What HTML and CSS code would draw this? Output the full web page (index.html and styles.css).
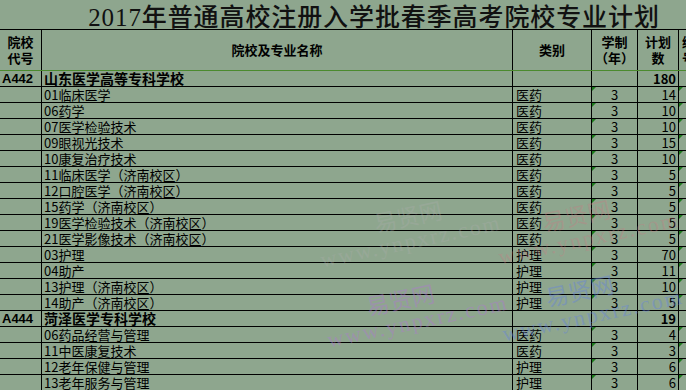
FILE: index.html
```
<!DOCTYPE html>
<html lang="zh-CN">
<head>
<meta charset="utf-8">
<title>2017年普通高校注册入学批春季高考院校专业计划</title>
<link rel="stylesheet" href="styles.css">
</head>
<body>
<div class="sheet">
  <div class="title"><span class="num">2017</span>年普通高校注册入学批春季高考院校专业计划</div>
  <div class="row head">
    <div class="cell c">院校<br>代号</div>
    <div class="cell c">院校及专业名称</div>
    <div class="cell c">类别</div>
    <div class="cell c">学制<br>（年）</div>
    <div class="cell c">计划<br>数</div>
    <div class="cell top">编<br>号</div>
  </div>
  <div class="row bold"><div class="cell code">A442</div><div class="cell name">山东医学高等专科学校</div><div class="cell"></div><div class="cell"></div><div class="cell r">180</div><div class="cell"></div></div>
  <div class="row"><div class="cell"></div><div class="cell name">01临床医学</div><div class="cell cat">医药</div><div class="cell c mk">3</div><div class="cell r">14</div><div class="cell mk"></div></div>
  <div class="row"><div class="cell"></div><div class="cell name">06药学</div><div class="cell cat">医药</div><div class="cell c mk">3</div><div class="cell r">10</div><div class="cell mk"></div></div>
  <div class="row"><div class="cell"></div><div class="cell name">07医学检验技术</div><div class="cell cat">医药</div><div class="cell c mk">3</div><div class="cell r">10</div><div class="cell mk"></div></div>
  <div class="row"><div class="cell"></div><div class="cell name">09眼视光技术</div><div class="cell cat">医药</div><div class="cell c mk">3</div><div class="cell r">15</div><div class="cell mk"></div></div>
  <div class="row"><div class="cell"></div><div class="cell name">10康复治疗技术</div><div class="cell cat">医药</div><div class="cell c mk">3</div><div class="cell r">10</div><div class="cell mk"></div></div>
  <div class="row"><div class="cell"></div><div class="cell name">11临床医学（济南校区）</div><div class="cell cat">医药</div><div class="cell c mk">3</div><div class="cell r">5</div><div class="cell mk"></div></div>
  <div class="row"><div class="cell"></div><div class="cell name">12口腔医学（济南校区）</div><div class="cell cat">医药</div><div class="cell c mk">3</div><div class="cell r">5</div><div class="cell mk"></div></div>
  <div class="row"><div class="cell"></div><div class="cell name">15药学（济南校区）</div><div class="cell cat">医药</div><div class="cell c mk">3</div><div class="cell r">5</div><div class="cell mk"></div></div>
  <div class="row"><div class="cell"></div><div class="cell name">19医学检验技术（济南校区）</div><div class="cell cat">医药</div><div class="cell c mk">3</div><div class="cell r">5</div><div class="cell mk"></div></div>
  <div class="row"><div class="cell"></div><div class="cell name">21医学影像技术（济南校区）</div><div class="cell cat">医药</div><div class="cell c mk">3</div><div class="cell r">5</div><div class="cell mk"></div></div>
  <div class="row"><div class="cell"></div><div class="cell name">03护理</div><div class="cell cat">护理</div><div class="cell c mk">3</div><div class="cell r">70</div><div class="cell mk"></div></div>
  <div class="row"><div class="cell"></div><div class="cell name">04助产</div><div class="cell cat">护理</div><div class="cell c mk">3</div><div class="cell r">11</div><div class="cell mk"></div></div>
  <div class="row"><div class="cell"></div><div class="cell name">13护理（济南校区）</div><div class="cell cat">护理</div><div class="cell c mk">3</div><div class="cell r">10</div><div class="cell mk"></div></div>
  <div class="row"><div class="cell"></div><div class="cell name">14助产（济南校区）</div><div class="cell cat">护理</div><div class="cell c mk">3</div><div class="cell r">5</div><div class="cell mk"></div></div>
  <div class="row bold"><div class="cell code">A444</div><div class="cell name">菏泽医学专科学校</div><div class="cell"></div><div class="cell"></div><div class="cell r">19</div><div class="cell"></div></div>
  <div class="row"><div class="cell"></div><div class="cell name">06药品经营与管理</div><div class="cell cat">医药</div><div class="cell c mk">3</div><div class="cell r">4</div><div class="cell mk"></div></div>
  <div class="row"><div class="cell"></div><div class="cell name">11中医康复技术</div><div class="cell cat">医药</div><div class="cell c mk">3</div><div class="cell r">3</div><div class="cell mk"></div></div>
  <div class="row"><div class="cell"></div><div class="cell name">12老年保健与管理</div><div class="cell cat">护理</div><div class="cell c mk">3</div><div class="cell r">6</div><div class="cell mk"></div></div>
  <div class="row"><div class="cell"></div><div class="cell name">13老年服务与管理</div><div class="cell cat">护理</div><div class="cell c mk">3</div><div class="cell r">6</div><div class="cell mk"></div></div>
</div>
<div class="wm wm-gray"><span class="wm-cn">易贤网</span><span class="wm-url">www.ynpxrz.com</span></div>
<div class="wm wm-pink"><span class="wm-cn">易贤网</span><span class="wm-url">www.ynpxrz.com</span></div>
<div class="wm wm-purple"><span class="wm-cn">易贤网</span><span class="wm-url">www.ynpxrz.com</span></div>
<div class="wm wm-blue"><span class="wm-cn">易贤网</span><span class="wm-url">www.ynpxrz.com</span></div>
</body>
</html>
```
FILE: styles.css
```
html, body {
  margin: 0;
  padding: 0;
}
body {
  background: #8ea68e;
  overflow: hidden;
  width: 686px;
  height: 390px;
  position: relative;
  font-family: "Noto Sans CJK SC", sans-serif;
  color: #000;
}
.sheet {
  width: 748px;
}
.title {
  box-sizing: border-box;
  height: 30px;
  border-bottom: 1px solid #000;
  text-align: center;
  font-family: "Noto Sans CJK SC", serif;
  font-size: 25px;
  font-weight: 500;
  line-height: 30px;
  letter-spacing: 0.9px;
  color: #111;
}
.title .num {
  font-family: "Liberation Serif", serif;
}
.row {
  display: grid;
  grid-template-columns: 42px 471px 79px 46px 41px 69px;
  box-sizing: border-box;
  height: 16px;
  border-bottom: 1px solid #000;
  font-size: 13px;
  line-height: 15px;
}
.row.head {
  height: 41px;
  border-bottom: 1px solid #4b8a2e;
  font-weight: bold;
  font-size: 13px;
  line-height: 16px;
}
.cell {
  box-sizing: border-box;
  border-right: 1px solid #000;
  position: relative;
  white-space: nowrap;
  overflow: hidden;
}
.cell:last-child {
  border-right: none;
}
.head .cell {
  display: flex;
  align-items: center;
  justify-content: center;
  text-align: center;
}
.head .cell.top {
  align-items: flex-start;
  justify-content: flex-start;
  padding: 4px 0 0 3px;
}
.c {
  text-align: center;
}
.r {
  text-align: right;
  padding-right: 2px;
}
.name {
  padding-left: 2px;
}
.cat {
  padding-left: 3px;
}
.bold {
  font-weight: bold;
}
.bold .name {
  font-size: 14px;
}
.code {
  font-family: "Liberation Sans", sans-serif;
  font-size: 13px;
  padding-left: 2px;
}
.mk::before {
  content: "";
  position: absolute;
  left: 0;
  top: 0;
  border-top: 4px solid #1d7a1d;
  border-right: 4px solid transparent;
}
.wm {
  position: absolute;
  pointer-events: none;
  font-family: "Liberation Serif", "Noto Sans CJK SC", serif;
  transform: rotate(-12deg);
  transform-origin: left top;
  white-space: nowrap;
}
.wm-cn {
  position: absolute;
  font-family: "Noto Sans CJK SC", sans-serif;
  font-size: 23px;
}
.wm-url {
  position: absolute;
  font-size: 22px;
  letter-spacing: 2px;
}
.wm-gray { left: 318px; top: 248px; color: rgba(175, 175, 175, 0.3); }
.wm-gray .wm-cn { left: 60px; top: -30px; }
.wm-gray .wm-url { left: 0; top: 0; }
.wm-pink { left: 496px; top: 245px; color: rgba(205, 120, 130, 0.32); }
.wm-pink .wm-cn { left: 50px; top: -30px; }
.wm-pink .wm-url { left: 0; top: 0; }
.wm-purple { left: 325px; top: 328px; color: rgba(175, 120, 210, 0.42); }
.wm-purple .wm-cn { left: 45px; top: -30px; }
.wm-purple .wm-url { left: 0; top: 0; }
.wm-blue { left: 500px; top: 322px; color: rgba(100, 130, 225, 0.42); }
.wm-blue .wm-cn { left: 50px; top: -32px; }
.wm-blue .wm-url { left: 0; top: 0; }
```
